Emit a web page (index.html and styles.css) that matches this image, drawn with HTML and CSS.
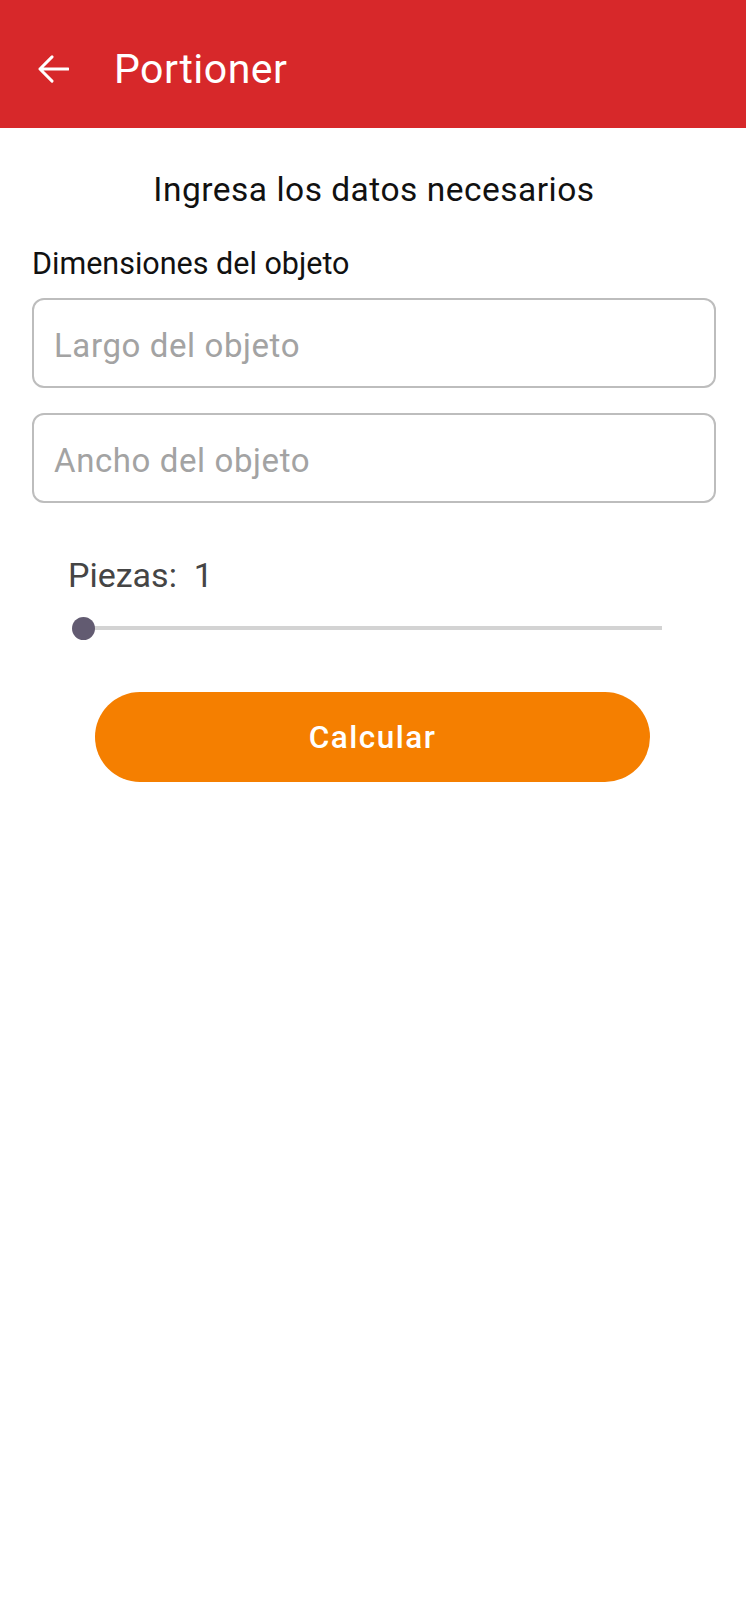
FILE: index.html
```html
<!DOCTYPE html>
<html lang="es">
<head>
<meta charset="utf-8">
<title>Portioner</title>
<link rel="stylesheet" href="styles.css">
</head>
<body>
<header class="appbar">
  <svg class="back" viewBox="0 0 32 28" width="31" height="28" aria-hidden="true">
    <path d="M2 14H31M14.5 1.5L2 14L14.5 26.5" fill="none" stroke="#fff" stroke-width="3" stroke-linecap="round" stroke-linejoin="round"/>
  </svg>
  <h1 class="title">Portioner</h1>
</header>
<main class="content">
  <h2 class="heading">Ingresa los datos necesarios</h2>
  <div class="label">Dimensiones del objeto</div>
  <div class="field"><span class="placeholder">Largo del objeto</span></div>
  <div class="field"><span class="placeholder">Ancho del objeto</span></div>
  <div class="pieces">Piezas:&nbsp; 1</div>
  <div class="slider">
    <div class="track"></div>
    <div class="thumb"></div>
  </div>
  <button class="calc">Calcular</button>
</main>
</body>
</html>
```
FILE: styles.css
```css
* { box-sizing: border-box; }
html, body { margin: 0; padding: 0; background: #fff; }
body { font-family: Roboto, "Noto Sans", sans-serif; width: 746px; }
.appbar {
  height: 128px;
  background: #d7282a;
  display: flex;
  align-items: center;
  padding: 10px 0 0 38px;
}
.back { display: block; margin-right: 45px; }
.title {
  margin: 0;
  color: #fff;
  font-weight: 400;
  font-size: 41px;
  letter-spacing: 0.5px;
}
.content { padding: 0 30px 0 32px; display: flex; flex-direction: column; }
.heading {
  margin: 40px 0 0;
  text-align: center;
  font-weight: 400;
  font-size: 33.5px;
  letter-spacing: 0.5px;
  line-height: 44px;
  color: #111;
}
.label {
  margin-top: 34px;
  font-size: 30.5px;
  line-height: 36px;
  color: #111;
}
.field {
  margin-top: 16px;
  height: 90px;
  border: 2px solid #bdbdbd;
  border-radius: 12px;
  display: flex;
  align-items: center;
  padding: 5px 0 0 20px;
}
.field + .field { margin-top: 25px; }
.placeholder { font-size: 33px; letter-spacing: 0.6px; color: #a3a3a3; }
.pieces {
  margin-top: 52px;
  margin-left: 36px;
  font-size: 34px;
  line-height: 40px;
  color: #454545;
}
.slider {
  position: relative;
  margin: 21px 0 0 40px;
  width: 590px;
  height: 24px;
  display: flex;
  align-items: center;
  padding-left: 11px;
}
.track { flex: 1; height: 4px; background: #d3d3d3; }
.thumb {
  position: absolute;
  left: 0;
  top: 0.5px;
  width: 23px;
  height: 23px;
  border-radius: 50%;
  background: #625b71;
}
.calc {
  margin: 52px 0 0 63px;
  width: 555px;
  height: 90px;
  border: none;
  border-radius: 45px;
  background: #f57f00;
  color: #fff;
  font-family: Roboto, sans-serif;
  font-weight: 500;
  font-size: 31.5px;
  letter-spacing: 1.5px;
}
```
